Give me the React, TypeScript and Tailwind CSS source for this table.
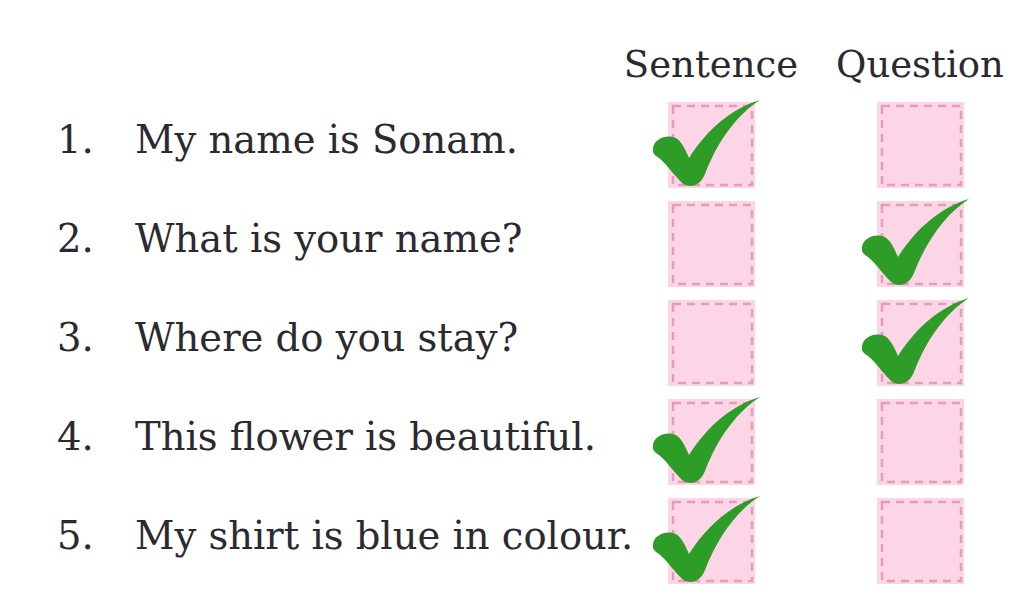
import React from 'react';

const rows = [
  { n: '1.', text: 'My name is Sonam.', answer: 'sentence' },
  { n: '2.', text: 'What is your name?', answer: 'question' },
  { n: '3.', text: 'Where do you stay?', answer: 'question' },
  { n: '4.', text: 'This flower is beautiful.', answer: 'sentence' },
  { n: '5.', text: 'My shirt is blue in colour.', answer: 'sentence' },
];

function Tick() {
  return (
    <svg
      className="absolute -left-[15px] -top-[2px] w-[108px] h-[86px]"
      viewBox="0 0 108 86"
    >
      <path
        d="M0 48 C1 40 11 35 20 37 C28 39 32 49 36 58 C55 28 80 8 107 0 C85 14 65 40 52 74 C48 84 40 88 32 85 C24 80 14 64 6 58 C1 55 -1 52 0 48 Z"
        fill="#2d9d28"
      />
    </svg>
  );
}

function Box({ checked }: { checked: boolean }) {
  return (
    <div className="relative w-[87px] h-[86px] bg-[#fcd6e6]">
      {/* dashed outline */}
      <svg className="absolute inset-0 w-full h-full" viewBox="0 0 87 86">
        <rect
          x="5"
          y="4"
          width="79"
          height="79"
          fill="none"
          stroke="#e79bbb"
          strokeWidth="2.5"
          strokeDasharray="8 6"
        />
      </svg>
      {checked && <Tick />}
    </div>
  );
}

export default function App() {
  return (
    <div className="w-[1024px] h-[612px] bg-white text-[#2a2a30] font-['DejaVu_Serif',serif] leading-none overflow-hidden">
      {/* column headings */}
      <div className="h-[102px] pt-[46px] pl-[621px] flex gap-[29px] text-[37px]">
        <div className="w-[180px] text-center">Sentence</div>
        <div className="w-[180px] text-center">Question</div>
      </div>

      {rows.map((r) => (
        <div key={r.n} className="h-[99px] flex items-start text-[38.5px]">
          <div className="w-[135px] pl-[57px] pt-[19px]">{r.n}</div>
          <div className="w-[486px] pt-[19px] whitespace-nowrap">{r.text}</div>
          <div className="w-[180px] flex justify-center">
            <Box checked={r.answer === 'sentence'} />
          </div>
          <div className="w-[29px]" />
          <div className="w-[180px] flex justify-center">
            <Box checked={r.answer === 'question'} />
          </div>
        </div>
      ))}
    </div>
  );
}
